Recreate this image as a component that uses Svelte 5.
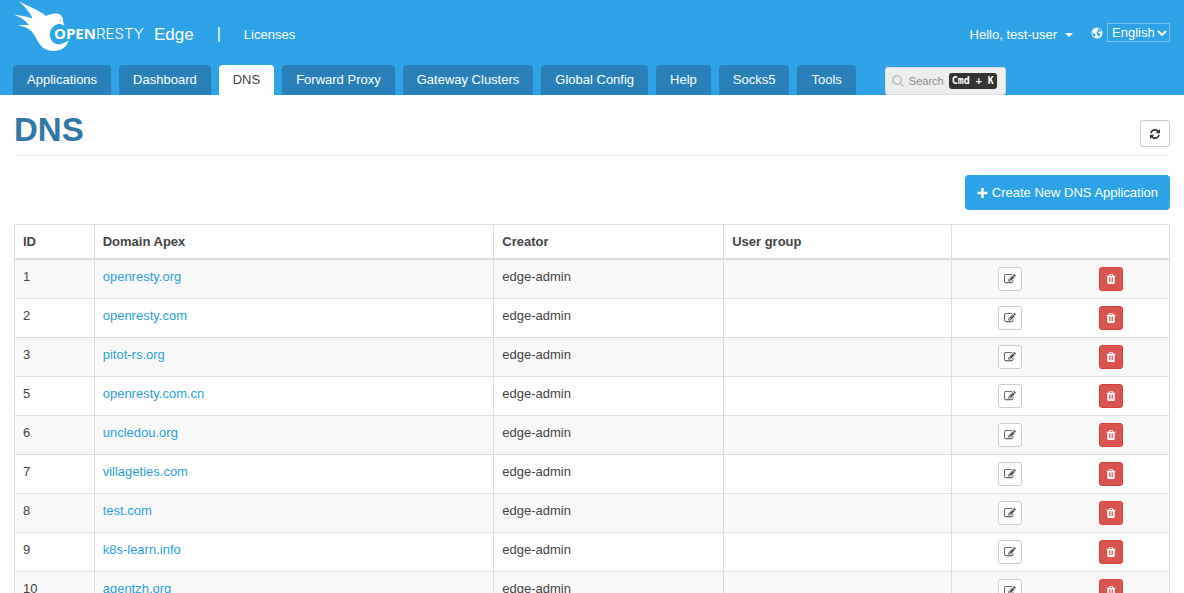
<script>
  const tabs = ['Applications', 'Dashboard', 'DNS', 'Forward Proxy', 'Gateway Clusters', 'Global Config', 'Help', 'Socks5', 'Tools'];
  let active = $state('DNS');
  let language = $state('English');
  const rows = [
    { id: 1, domain: 'openresty.org' },
    { id: 2, domain: 'openresty.com' },
    { id: 3, domain: 'pitot-rs.org' },
    { id: 5, domain: 'openresty.com.cn' },
    { id: 6, domain: 'uncledou.org' },
    { id: 7, domain: 'villageties.com' },
    { id: 8, domain: 'test.com' },
    { id: 9, domain: 'k8s-learn.info' },
    { id: 10, domain: 'agentzh.org' }
  ];
</script>

<header>
  <div class="top">
    <a class="brand" href="#home" aria-label="OpenResty Edge">
      <svg width="136" height="54" viewBox="10 0 136 54" aria-hidden="true">
        <path fill="#fff" d="M19 1C26 6 38 9 46 16C50 14 53 13.500 57 13.500C61 14 63 17 63 20.500L64 26C62.500 24.500 61 24 59 24C53 24.500 49.500 30 50 35.500C50.500 42 56 45.500 61 44C64 43 66 42 68.500 40.500C67 47 61 51 53 51C45 51 40 46 36.500 39C33 31 28 27 18 25.500C22 24.500 25 25 29 25C25 20 20 17 14 14.500C20 15.500 26 16 32.500 18.500C30 12 24 6 19 1Z" />
        <circle cx="60.500" cy="20.500" r="0.600" fill="#2ea3e8" />
        <text x="54" y="39" class="open">OPEN</text>
        <text x="96" y="39" class="resty">RESTY</text>
      </svg>
      <span class="edge">Edge</span>
    </a>
    <span class="bar">|</span>
    <a class="licenses" href="#licenses">Licenses</a>
    <button class="user" type="button">Hello, test-user <i class="caret"></i></button>
    <label class="lang">
      <svg width="12" height="12" viewBox="0 0 12 12" aria-hidden="true">
        <circle cx="6" cy="6" r="5.500" fill="#fff" />
        <path fill="#2ea3e8" d="M6.500 1.200L9 2L10.500 4.500L9.500 5L8.500 4L7 5L8 6.500L9.500 6.800L9 8.500L7.500 10L7 8L5.500 6.500L6 4.500L7.500 3ZM1.300 5L3 6.500L4.500 7.500L4 9L3.500 10L1.800 8.500Z" />
      </svg>
      <span class="select">
        <select bind:value={language} aria-label="Language">
          <option>English</option>
          <option>中文</option>
        </select>
        <svg class="chev" width="10" height="6" viewBox="0 0 10 6" aria-hidden="true"><path d="M1 1L5 5L9 1" fill="none" stroke="#fff" stroke-width="2" /></svg>
      </span>
    </label>
  </div>
  <nav>
    {#each tabs as tab}
      <a href="#{tab}" class:active={tab === active} onclick={() => (active = tab)}>{tab}</a>
    {/each}
    <button class="search" type="button">
      <svg width="12" height="12" viewBox="0 0 12 12" aria-hidden="true"><circle cx="5" cy="5" r="4.200" /><path d="M8 8L11.500 11.500" /></svg>
      Search <kbd>Cmd + K</kbd>
    </button>
  </nav>
</header>

<main>
  <div class="title">
    <h1>DNS</h1>
    <button class="refresh" type="button" aria-label="Refresh">
      <svg width="10" height="10" viewBox="0 0 1536 1536" aria-hidden="true"><path d="M1511 928q0 5-1 7q-64 268-268 434.500T764 1536q-146 0-282.500-55T238 1324l-129 129q-19 19-45 19t-45-19t-19-45V960q0-26 19-45t45-19h448q26 0 45 19t19 45t-19 45l-137 137q71 66 161 102t187 36q134 0 250-65t186-179q11-17 53-117q8-23 30-23h192q13 0 22.500 9.500t9.500 22.500zm25-800v448q0 26-19 45t-45 19h-448q-26 0-45-19t-19-45t19-45l138-138Q969 256 768 256q-134 0-250 65T332 500q-11 17-53 117q-8 23-30 23H50q-13 0-22.500-9.500T18 608v-7q65-268 270-434.500T768 0q146 0 284 55.500T1297 212l130-129q19-19 45-19t45 19t19 45z" /></svg>
    </button>
  </div>
  <div class="actions">
    <button class="create" type="button">
      <svg width="11" height="10" viewBox="0 0 11 10" aria-hidden="true"><path d="M5.500 0V10M0.500 5H10.500" stroke="#fff" stroke-width="2.600" /></svg>
      Create New DNS Application
    </button>
  </div>
  <table>
    <colgroup><col class="c-id" /><col class="c-domain" /><col class="c-creator" /><col class="c-group" /><col /></colgroup>
    <thead>
      <tr><th>ID</th><th>Domain Apex</th><th>Creator</th><th>User group</th><th></th></tr>
    </thead>
    <tbody>
      {#each rows as row}
        <tr>
          <td>{row.id}</td>
          <td><a href="#{row.domain}">{row.domain}</a></td>
          <td>edge-admin</td>
          <td></td>
          <td>
            <div class="ops">
              <button class="edit" type="button" aria-label="Edit {row.domain}">
                <svg width="12" height="10" viewBox="0 0 1792 1536" aria-hidden="true"><path d="M888 1056l116-116l-152-152l-116 116v56h96v96h56zm440-720q-16-16-33 1L945 687q-17 17-1 33t33-1l350-350q17-17 1-33zm80 594v190q0 119-84.500 203.500T1120 1408H288q-119 0-203.500-84.500T0 1120V288Q0 169 84.500 84.500T288 0h832q63 0 117 25q15 7 18 23q3 17-9 29l-49 49q-14 14-32 8q-23-6-45-6H288q-66 0-113 47t-47 113v832q0 66 47 113t113 47h832q66 0 113-47t47-113V994q0-13 9-22l64-64q15-15 35-7t20 29zm-96-738l288 288l-672 672H640V864zm444 132l-92 92l-288-288l92-92q28-28 68-28t68 28l152 152q28 28 28 68t-28 68z" /></svg>
              </button>
              <button class="delete" type="button" aria-label="Delete {row.domain}">
                <svg width="10" height="10" viewBox="0 0 1408 1536" aria-hidden="true"><path d="M512 1248V544q0-14-9-23t-23-9h-64q-14 0-23 9t-9 23v704q0 14 9 23t23 9h64q14 0 23-9t9-23zm256 0V544q0-14-9-23t-23-9h-64q-14 0-23 9t-9 23v704q0 14 9 23t23 9h64q14 0 23-9t9-23zm256 0V544q0-14-9-23t-23-9h-64q-14 0-23 9t-9 23v704q0 14 9 23t23 9h64q14 0 23-9t9-23zM480 256h448l-48-117q-7-9-17-11H546q-10 2-17 11zm928 32v64q0 14-9 23t-23 9h-96v948q0 83-47 143.500t-113 60.500H288q-66 0-113-58.500T128 1336V384H32q-14 0-23-9t-9-23v-64q0-14 9-23t23-9h309l70-167q15-37 54-63t79-26h320q40 0 79 26t54 63l70 167h309q14 0 23 9t9 23z" /></svg>
              </button>
            </div>
          </td>
        </tr>
      {/each}
    </tbody>
  </table>
</main>

<style>
  :global(body) {
    margin: 0;
    background: #fff;
    font: 13px/18px "Liberation Sans", Arial, sans-serif;
    color: #444;
  }
  a { text-decoration: none; }
  button, select { font: inherit; margin: 0; cursor: pointer; }
  header { background: #2ea3e8; color: #fff; }
  header a { color: #fff; }
  .top { display: flex; align-items: center; height: 65px; padding: 0 14px 0 10px; }
  .brand { display: flex; align-items: center; gap: 8px; height: 65px; }
  .brand svg { align-self: flex-start; }
  .open { font: 700 15px "Open Sans", sans-serif; fill: #fff; }
  .resty { font: 300 15px Inter, sans-serif; fill: #fff; }
  .edge { font-size: 17px; padding-top: 4px; }
  .bar { margin: 0 23px; font-size: 16px; padding-top: 2px; }
  .licenses { padding-top: 4px; }
  .user { display: flex; align-items: center; gap: 8px; margin-left: auto; padding: 4px 0 0; border: 0; background: none; color: #fff; }
  .caret { border: 4px solid transparent; border-top-color: #fff; border-bottom: 0; }
  .lang { display: flex; align-items: center; gap: 4px; margin-left: 18px; }
  .select { display: grid; align-items: center; }
  .select select { grid-area: 1 / 1; height: 19px; padding: 0 14px 0 4px; border: 1px solid #7cc4f0; border-radius: 0; background: none; color: #fff; appearance: none; }
  .chev { grid-area: 1 / 1; justify-self: end; margin-right: 3px; pointer-events: none; }
  nav { display: flex; gap: 8px; padding: 0 13px; }
  nav a { height: 30px; line-height: 30px; padding: 0 14px; border-radius: 4px 4px 0 0; background: #2980b9; white-space: nowrap; }
  nav a.active { background: #fff; color: #444; }
  .search { display: flex; align-items: center; gap: 5px; height: 28px; margin: 2px 0 0 21px; padding: 0 8px 0 6px; border: 1px solid #ddd; border-radius: 3px; background: #eee; color: #888; font-size: 11px; }
  .search svg { fill: none; stroke: #bbb; stroke-width: 1.5; }
  kbd { padding: 0 3px; border-radius: 3px; background: #333; color: #fff; font: 700 10px/16px "DejaVu Sans Mono", monospace; }
  main { padding: 0 14px; }
  .title { display: flex; justify-content: space-between; align-items: flex-end; height: 60px; border-bottom: 1px solid #eee; }
  h1 { margin: 0 0 5px; font-size: 33px; line-height: 40px; font-weight: 700; color: #3178a5; }
  .refresh { display: flex; align-items: center; justify-content: center; width: 30px; height: 27px; margin-bottom: 8px; padding: 0; border: 1px solid #ccc; border-radius: 3px; background: #fff; }
  .refresh svg { fill: #333; }
  .actions { display: flex; justify-content: flex-end; padding: 19px 0 14px; }
  .create { display: flex; align-items: center; gap: 4px; height: 35px; padding: 0 12px; border: 0; border-radius: 4px; background: #2ea3e8; color: #fff; }
  table { width: 100%; table-layout: fixed; border-collapse: collapse; }
  .c-id { width: 6.900%; }
  .c-domain { width: 34.6%; }
  .c-creator { width: 19.900%; }
  .c-group { width: 19.700%; }
  th, td { box-sizing: border-box; padding: 8px; border: 1px solid #ddd; text-align: left; vertical-align: top; }
  th { height: 34px; padding-bottom: 7px; border-bottom-width: 2px; }
  td { height: 39px; }
  tbody tr:nth-child(odd) { background: #f9f9f9; }
  td a { color: #2d9fd8; }
  td:last-child { padding: 7px 8px; }
  .ops { display: grid; grid-template-columns: 1fr 1fr; justify-items: center; }
  .ops button { display: flex; align-items: center; justify-content: center; width: 24px; height: 24px; padding: 0; border: 1px solid #ccc; border-radius: 3px; background: #fff; }
  .edit svg { fill: #444; }
  .ops .delete { border-color: #d43f3a; background: #d9534f; }
  .delete svg { fill: #fff; }
</style>
